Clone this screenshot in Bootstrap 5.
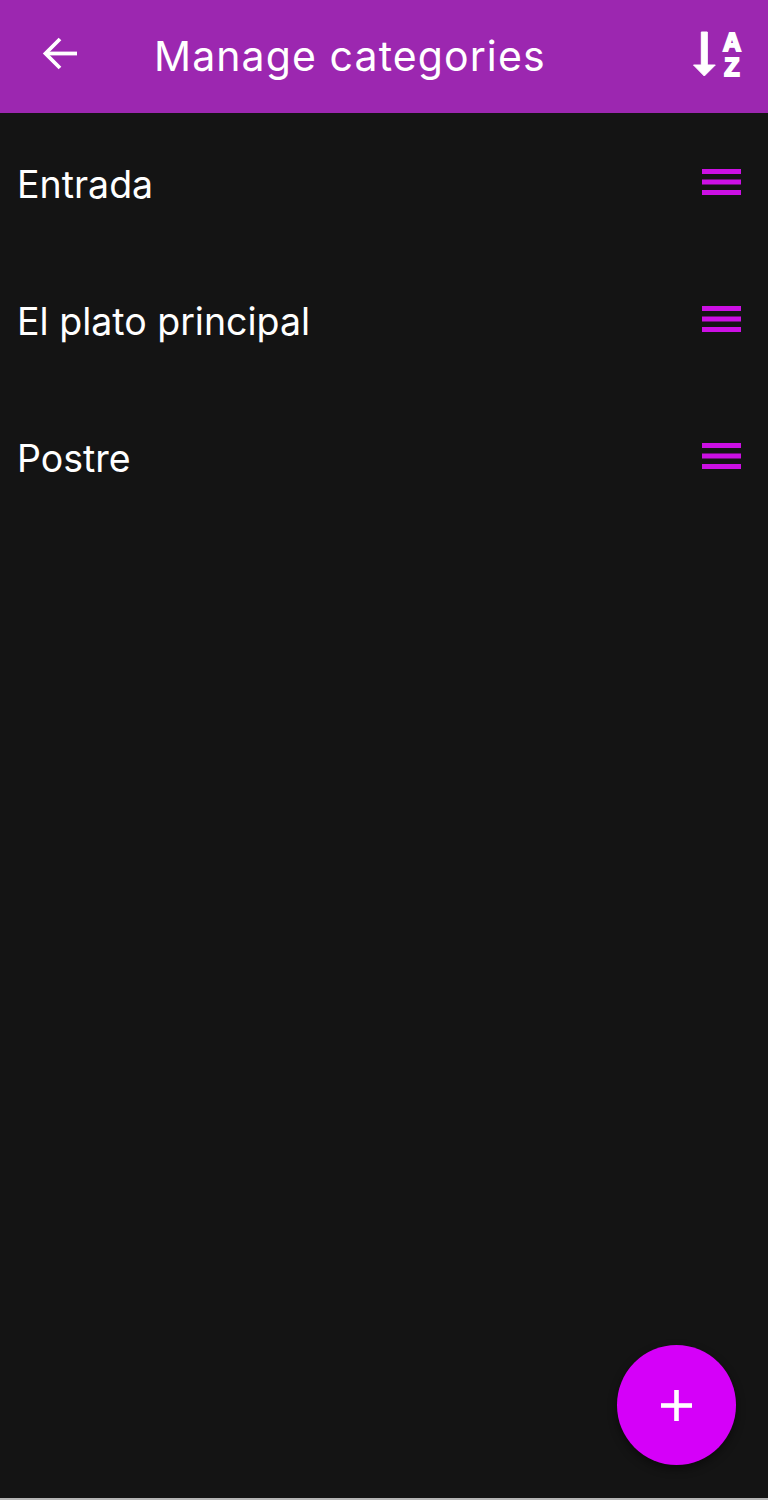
<!DOCTYPE html>
<html lang="en">
<head>
<meta charset="UTF-8">
<meta name="viewport" content="width=device-width, initial-scale=1.0">
<title>Manage categories</title>
<link rel="stylesheet" href="https://cdn.jsdelivr.net/npm/bootstrap@5.3.0/dist/css/bootstrap.min.css">
<style>
html, body { height: 1500px; overflow: hidden; }
body { background: #141414; font-family: Inter, sans-serif; }
.app-screen { height: 1498px; }
.end-line { height: 2px; background: #b5b5b5; }
.top-bar { height: 113px; background: #9c27b0; padding: 0 26px 6px 41px; }
.back-btn { width: 38px; height: 38px; }
.bar-title { font-size: 41px; font-weight: 400; margin: 0 0 0 75px; padding-top: 5px; line-height: 1; letter-spacing: 1.1px; }
.cat-list { padding-top: 1px; }
.cat-row { height: 137px; padding-left: 17px; padding-right: 27px; background: transparent; border: 0; }
.cat-name { font-size: 37.5px; line-height: 1; padding-top: 4px; }
.add-fab { position: absolute; left: 616.5px; top: 1345px; width: 119.5px; height: 120px; background: #d500f9; box-shadow: 0 4px 10px rgba(0,0,0,.45); }
.az-txt { font-family: "Liberation Sans", sans-serif; font-weight: 700; font-size: 25px; fill: #fff; stroke: #fff; stroke-width: 2px; }
</style>
</head>
<body class="position-relative">
<div class="app-screen d-flex flex-column text-white">
    <header class="top-bar d-flex align-items-center">
        <svg class="back-btn" viewBox="0 0 38 38" fill="none" stroke="#fff" stroke-width="3.8">
            <path d="M36 18.500H5"/>
            <path d="M19 4L4.500 18.500L19 33"/>
        </svg>
        <h1 class="bar-title flex-grow-1">Manage categories</h1>
        <svg width="50" height="46" viewBox="0 0 50 46" class="overflow-visible">
            <path fill="#fff" stroke="#fff" stroke-width="1" stroke-linejoin="round" d="M9.300 1h6v33h8l-11 11L1.500 34h7.800z"/>
            <text class="az-txt" x="40" y="19.500" text-anchor="middle">A</text>
            <text class="az-txt" x="40" y="45" text-anchor="middle">Z</text>
        </svg>
    </header>
    <div class="cat-list list-group list-group-flush">
        <div class="cat-row list-group-item d-flex align-items-center justify-content-between text-white">
            <span class="cat-name">Entrada</span>
            <svg width="39" height="27" viewBox="0 0 39 27" fill="#cc10e4"><rect y="0" width="39" height="5"/><rect y="10.500" width="39" height="5"/><rect y="21" width="39" height="5"/></svg>
        </div>
        <div class="cat-row list-group-item d-flex align-items-center justify-content-between text-white">
            <span class="cat-name">El plato principal</span>
            <svg width="39" height="27" viewBox="0 0 39 27" fill="#cc10e4"><rect y="0" width="39" height="5"/><rect y="10.500" width="39" height="5"/><rect y="21" width="39" height="5"/></svg>
        </div>
        <div class="cat-row list-group-item d-flex align-items-center justify-content-between text-white">
            <span class="cat-name">Postre</span>
            <svg width="39" height="27" viewBox="0 0 39 27" fill="#cc10e4"><rect y="0" width="39" height="5"/><rect y="10.500" width="39" height="5"/><rect y="21" width="39" height="5"/></svg>
        </div>
    </div>
</div>
<div class="end-line"></div>
<button class="add-fab btn rounded-circle border-0 p-0 d-flex align-items-center justify-content-center" type="button" aria-label="Add category">
    <svg width="31" height="31" viewBox="0 0 31 31" fill="#fff"><rect x="13.200" y="0" width="4.600" height="31"/><rect x="0" y="13.200" width="31" height="4.600"/></svg>
</button>
<script src="https://cdn.jsdelivr.net/npm/bootstrap@5.3.0/dist/js/bootstrap.bundle.min.js"></script>
</body>
</html>
